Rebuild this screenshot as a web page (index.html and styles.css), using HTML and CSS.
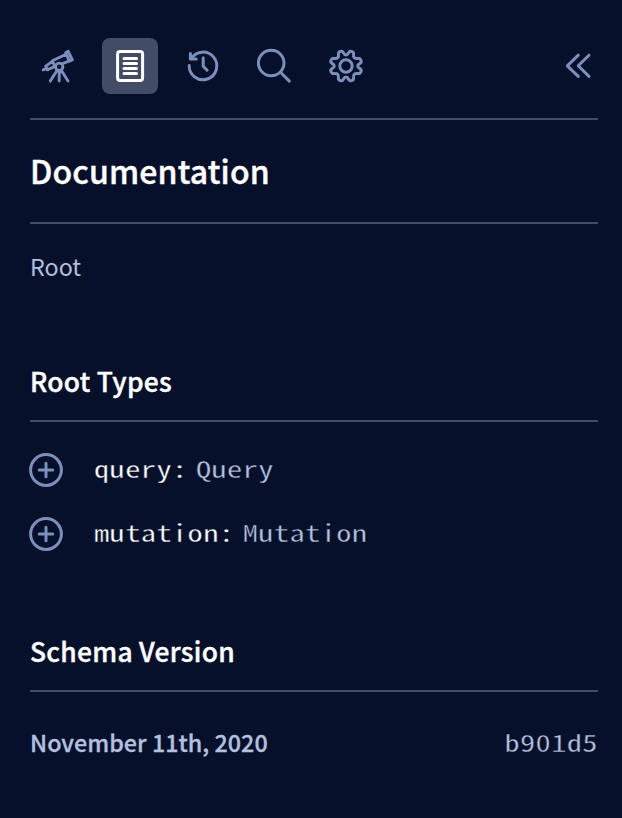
FILE: index.html
```html
<!DOCTYPE html>
<html lang="en">
<head>
<meta charset="utf-8">
<title>Documentation</title>
<link rel="stylesheet" href="styles.css">
</head>
<body>
<main class="panel">
  <nav class="toolbar">
    <button class="tool" aria-label="Explorer">
      <svg class="icon telescope" viewBox="0 0 56 56">
        <path d="M35.6 14.8 38.2 13.3 42.4 21.8 39.4 23.2ZM36 16.3 22.4 22.8 24.8 28.5 39 23.2M22.4 23.4 15.8 28.2 17.2 31.8 24.8 28.5M13.2 31.8 16.4 30.4M27 32.5 20.2 43.1M29.2 33V43.1M31.4 32.5 38 43.1"/>
        <circle class="hub" cx="29.2" cy="28.8" r="3.7"/>
      </svg>
    </button>
    <button class="tool tool-active" aria-label="Documentation">
      <svg class="icon" viewBox="0 0 56 56">
        <rect x="15.6" y="13.6" width="25" height="29" rx="2.5"/>
        <path d="M22 20.5H34.5M22 25.5H34.5M22 30.5H34.5M22 35.5H34.5"/>
      </svg>
    </button>
    <button class="tool" aria-label="History">
      <svg class="icon" viewBox="0 0 56 56">
        <path d="M17 21.1A13.8 13.8 0 1 1 15.2 27.4M16.4 15.6V21.1H22.2M29.2 19.8V28.2L33.1 32.2"/>
      </svg>
    </button>
    <button class="tool" aria-label="Search">
      <svg class="icon" viewBox="0 0 56 56">
        <circle cx="25.2" cy="25" r="12.8"/><path d="M34.5 34.2 43.3 43.1"/>
      </svg>
    </button>
    <button class="tool" aria-label="Settings">
      <svg class="icon" viewBox="0 0 56 56">
        <circle cx="28" cy="28" r="6.2"/>
        <path d="M25.2 14.4Q28 19.4 30.8 14.4C31.8 12.2 35.6 13.4 35.6 15.8Q34.6 21.2 40.2 20.4C42.6 20 44.3 23.6 42.3 25.1Q37 28 42.3 30.9C44.3 32.4 42.6 36 40.2 35.6Q34.6 34.8 35.6 40.2C35.6 42.6 31.8 43.8 30.8 41.6Q28 36.6 25.2 41.6C24.2 43.8 20.4 42.6 20.4 40.2Q21.4 34.8 15.8 35.6C13.4 36 11.7 32.4 13.7 30.9Q19 28 13.7 25.1C11.7 23.6 13.4 20 15.8 20.4Q21.4 21.2 20.4 15.8C20.4 13.4 24.2 12.2 25.2 14.4Z"/>
      </svg>
    </button>
    <button class="collapse" aria-label="Collapse">
      <svg class="chevrons" viewBox="0 0 28 28"><path d="M14.3 3.2 3.3 13.8 14.3 24.4M25 3.2 14.2 13.8 25 24.4"/></svg>
    </button>
  </nav>
  <h1 class="title">Documentation</h1>
  <p class="crumb">Root</p>
  <section class="types">
    <h2 class="heading">Root Types</h2>
    <div class="field">
      <svg class="plus" viewBox="0 0 34 34"><circle cx="17" cy="17" r="15.4"/><path d="M17 10.3V23.7M10.3 17H23.7"/></svg>
      <div class="code"><span class="name">query:</span><span class="type">Query</span></div>
    </div>
    <div class="field">
      <svg class="plus" viewBox="0 0 34 34"><circle cx="17" cy="17" r="15.4"/><path d="M17 10.3V23.7M10.3 17H23.7"/></svg>
      <div class="code"><span class="name">mutation:</span><span class="type">Mutation</span></div>
    </div>
  </section>
  <section class="version">
    <h2 class="heading">Schema Version</h2>
    <div class="release"><span class="date">November 11th, 2020</span><span class="code hash">b901d5</span></div>
  </section>
</main>
</body>
</html>
```
FILE: styles.css
```css
* { box-sizing: border-box; }
body { margin: 0; background: #06102b; color: #fff; font-family: "Noto Sans CJK JP", "Noto Sans", sans-serif; }
.panel { height: 818px; padding: 0 24px 0 30px; overflow: hidden; }
.toolbar { display: flex; align-items: flex-start; gap: 16px; height: 120px; padding-top: 38px; border-bottom: 2px solid #424c66; }
.tool, .collapse { width: 56px; height: 56px; padding: 0; border: 0; border-radius: 8px; background: none; color: #7b8fbb; }
.tool-active { background: #424c66; color: #fff; }
.icon { display: block; width: 56px; height: 56px; }
svg { fill: none; stroke: currentColor; stroke-width: 3; stroke-linecap: round; stroke-linejoin: round; }
.telescope { stroke-width: 2.9; }
.hub { fill: #06102b; }
.collapse { display: flex; align-items: center; justify-content: flex-end; margin-left: auto; padding-right: 6px; }
.chevrons { width: 28px; height: 28px; }
.title, .heading, .date { font-weight: 500; -webkit-text-stroke: 0.4px currentColor; }
.title { height: 104px; margin: 0; border-bottom: 2px solid #424c66; font-size: 32px; line-height: 100px; letter-spacing: 0.15px; }
.crumb { height: 90px; margin: 0; color: #b4c0df; font-size: 23.3px; line-height: 84px; }
.types { height: 270px; padding-top: 48px; }
.heading { height: 60px; margin: 0; border-bottom: 2px solid #424c66; font-size: 26.4px; line-height: 38px; letter-spacing: 0.3px; }
.field { display: flex; align-items: center; height: 64px; }
.heading + .field { margin-top: 16px; }
.plus { width: 34px; height: 34px; margin-left: -1px; margin-right: 31px; color: #7b8fbb; }
.code { font-family: "Noto Sans Mono CJK JP", "DejaVu Sans Mono", monospace; font-size: 23.4px; line-height: 34px; letter-spacing: 0.3px; transform: scaleX(1.3); transform-origin: left; padding-bottom: 4px; -webkit-text-stroke: 0.3px #06102b; }
.name { margin-right: 6.4px; }
.type, .hash { color: #b4c0df; }
.hash { transform-origin: right; }
.version { padding-top: 48px; }
.release { display: flex; align-items: center; justify-content: space-between; height: 104px; color: #b4c0df; }
.date { font-size: 23.3px; line-height: 34px; padding-bottom: 4px; letter-spacing: 0.03px; -webkit-text-stroke-width: 0.3px; }
```
